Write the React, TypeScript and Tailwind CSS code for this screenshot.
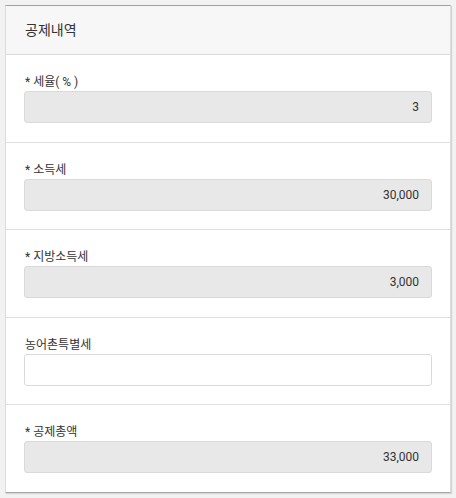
const fields = [
  { label: '* 세율( % )', value: '3', readOnly: true },
  { label: '* 소득세', value: '30,000', readOnly: true },
  { label: '* 지방소득세', value: '3,000', readOnly: true },
  { label: '농어촌특별세', value: '', readOnly: false },
  { label: '* 공제총액', value: '33,000', readOnly: true },
];

export default function App() {
  return (
    <div
      className="min-h-[498px] bg-[#f2f2f2] px-[5px] pt-[5px]"
      style={{ fontFamily: 'Roboto, "Noto Sans CJK KR", sans-serif' }}
    >
      <div className="w-[446px] border border-[#dcdcdc] border-t-[#a0a0a0] border-b-[#a8a8a8] bg-white shadow-[1px_1px_1px_rgba(0,0,0,0.12)]">
        <div className="flex h-[49px] items-center border-b border-[#dcdcdc] bg-[#f7f7f7] px-[19px]">
          <h2 className="text-[14px] text-[#333]">공제내역</h2>
        </div>
        {fields.map((f, i) => (
          <div
            key={f.label}
            className={`px-[18px] pt-[18px] pb-[18.5px] ${i < fields.length - 1 ? 'border-b border-[#e0e0e0]' : ''}`}
          >
            <label className="block h-[18px] pl-px text-[12px] leading-[18px] text-[#333]">{f.label}</label>
            <input
              readOnly={f.readOnly}
              defaultValue={f.value}
              className={`block h-[32px] w-full rounded-[3px] border border-[#dadada] px-3 text-right text-[12px] text-[#333] outline-none ${
                f.readOnly ? 'bg-[#e8e8e8]' : 'bg-white'
              }`}
            />
          </div>
        ))}
      </div>
    </div>
  );
}
